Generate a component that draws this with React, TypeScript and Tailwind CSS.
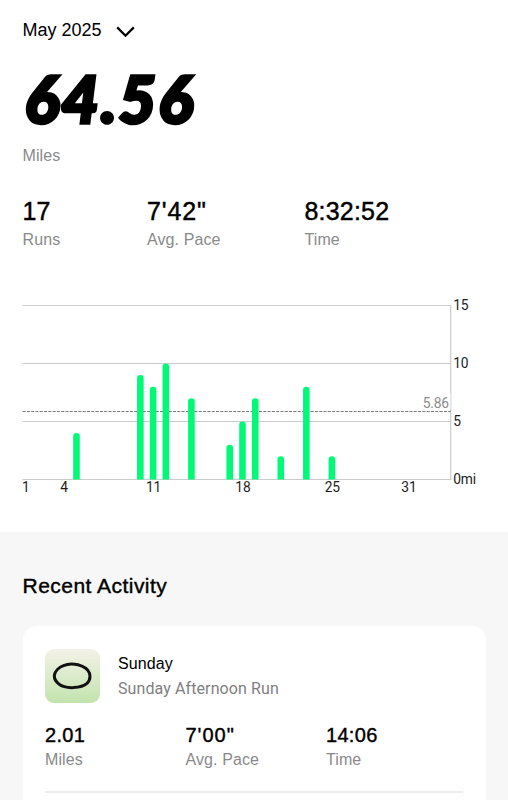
import * as React from 'react'

type Stat = { value: string; label: string }

const totals: Stat[] = [
  { value: '17', label: 'Runs' },
  { value: '7\'42"', label: 'Avg. Pace' },
  { value: '8:32:52', label: 'Time' },
]

const lastRun: Stat[] = [
  { value: '2.01', label: 'Miles' },
  { value: '7\'00"', label: 'Avg. Pace' },
  { value: '14:06', label: 'Time' },
]

const runs = [
  { day: 5, miles: 4 },
  { day: 10, miles: 9 },
  { day: 11, miles: 8 },
  { day: 12, miles: 10 },
  { day: 14, miles: 7 },
  { day: 17, miles: 3 },
  { day: 18, miles: 5 },
  { day: 19, miles: 7 },
  { day: 21, miles: 2 },
  { day: 23, miles: 8 },
  { day: 25, miles: 2 },
]

const dayTicks = [1, 4, 11, 18, 25, 31]
const mileTicks = [15, 10, 5, 0]
const average = 5.86

const PLOT_RIGHT = 427.7
const BASE = 189.5

const dayX = (day: number) => 2.4 + (day - 1) * 12.77
const milesY = (miles: number) => BASE - miles * 11.6

function bar(day: number, miles: number) {
  const left = dayX(day) - 3.3
  const top = milesY(miles)
  return `M${left} ${BASE}V${top + 3.3}a3.3 3.3 0 0 1 6.6 0V${BASE}z`
}

function MonthChart() {
  return (
    <svg
      width="485"
      height="212"
      viewBox="0 0 485 212"
      className="block overflow-visible font-[Roboto,sans-serif] text-[13.8px] tracking-[-0.2px]"
    >
      {mileTicks.map((miles) => (
        <g key={miles}>
          <line
            x1="-0.5"
            x2={PLOT_RIGHT}
            y1={milesY(miles)}
            y2={milesY(miles)}
            stroke="#cbcbcb"
            strokeWidth="1.2"
          />
          <text x="430.2" y={milesY(miles) + 4.7} fill="#1c1c1c">
            {miles === 0 ? '0mi' : miles}
          </text>
        </g>
      ))}
      <line x1={PLOT_RIGHT} x2={PLOT_RIGHT} y1="15" y2="190" stroke="#cbcbcb" strokeWidth="1.2" />
      <rect x="398" y="103" width="29.4" height="16" fill="white" />
      <rect x="427.4" y="103" width="1.2" height="15" fill="#e8e8e8" />
      <line
        x1="-0.5"
        x2={PLOT_RIGHT}
        y1={milesY(average)}
        y2={milesY(average)}
        stroke="#777777"
        strokeDasharray="3 1.3"
      />
      <text x="425.9" y="118" textAnchor="end" fill="#8c8c8c">
        {average}
      </text>
      {runs.map((run) => (
        <path key={run.day} d={bar(run.day, run.miles)} fill="#00fa78" />
      ))}
      {dayTicks.map((day) => (
        <text key={day} x={dayX(day) + 0.4} y="202" textAnchor="middle" fill="#1c1c1c">
          {day}
        </text>
      ))}
    </svg>
  )
}

function RouteThumb() {
  return (
    <div className="flex h-[54px] w-[54.5px] items-center justify-center rounded-[9px] bg-linear-to-b from-[#f4f2e8] to-[#c2e3ad]">
      <svg width="40" height="28" viewBox="0 0 40 28" fill="none" stroke="#111" strokeWidth="3">
        <path
          d="M11.5 3.6C15 2 21 1.5 26 2.8C31 4.2 36 7.2 37.4 11C38.4 14.6 38 18.6 35 21.4C31.4 24.6 26.5 25.3 21.5 25.6C16 25.8 10.6 25.2 7 22.2C3.8 19.6 2 16.6 2.4 13.2C3 9.4 7 5.4 11.5 3.6Z"
          strokeLinejoin="round"
        />
      </svg>
    </div>
  )
}

export default function App() {
  return (
    <div className="flex h-[800px] w-[508px] flex-col overflow-hidden bg-white font-['Liberation_Sans',Arial,sans-serif] text-black">
      <div className="flex h-[532px] shrink-0 flex-col pt-[20px] pl-[22.5px]">
        <div className="flex h-5 items-center gap-[14px] text-[18px] leading-5">
          <span>May 2025</span>
          <svg width="19" height="12" viewBox="0 0 19 12" fill="none" stroke="black" strokeWidth="2.3" className="mt-[3px]">
            <path d="M1.2 1.4L9.5 9.7L17.8 1.4" />
          </svg>
        </div>

        <div className="mt-[22px] ml-[2px] h-[72px] font-[Lato,sans-serif] text-[65px] leading-[72px] font-black tracking-[2px] italic [font-kerning:none] [-webkit-text-stroke:3.4px_black]">
          64.56
        </div>
        <div className="mt-[12px] text-base leading-5 tracking-[0.1px] text-[#8a8a8a]">Miles</div>

        <div className="mt-[31px] grid grid-cols-[124.5px_157.5px_1fr]">
          {totals.map((stat) => (
            <div key={stat.label}>
              <div
                className={`h-7 text-[25px] leading-7 [-webkit-text-stroke:0.45px_black] ${
                  stat.label === 'Avg. Pace' ? 'tracking-[0.9px]' : 'tracking-[0.2px]'
                }`}
              >
                {stat.value}
              </div>
              <div className="mt-[5px] text-base leading-5 tracking-[0.1px] text-[#8a8a8a]">{stat.label}</div>
            </div>
          ))}
        </div>

        <div className="mt-[40px]">
          <MonthChart />
        </div>
      </div>

      <div className="flex grow flex-col bg-[#f7f7f7] px-[22.5px] pt-[42px]">
        <h2 className="h-6 text-[21px] leading-6 tracking-[0.47px] [-webkit-text-stroke:0.4px_black]">
          Recent Activity
        </h2>
        <div className="mt-7 h-[200px] rounded-t-[14px] bg-white px-[22.5px] pt-[23px]">
          <div className="flex gap-[18.5px]">
            <RouteThumb />
            <div className="pt-[5px]">
              <div className="text-base leading-5 tracking-[0.1px]">Sunday</div>
              <div className="mt-[5px] font-[Roboto,sans-serif] text-base leading-5 tracking-[0.1px] text-[#808080]">
                Sunday Afternoon Run
              </div>
            </div>
          </div>
          <div className="mt-[20px] grid grid-cols-[140.5px_140.5px_1fr] border-b-2 border-[#eeeeee] pb-[21px]">
            {lastRun.map((stat) => (
              <div key={stat.label}>
                <div
                  className={`h-6 text-[20px] leading-6 [-webkit-text-stroke:0.4px_black] ${
                    stat.label === 'Avg. Pace' ? 'tracking-[1px]' : 'tracking-[0.3px]'
                  }`}
                >
                  {stat.value}
                </div>
                <div className="mt-[3px] text-base leading-5 tracking-[0.1px] text-[#8a8a8a]">{stat.label}</div>
              </div>
            ))}
          </div>
        </div>
      </div>
    </div>
  )
}
